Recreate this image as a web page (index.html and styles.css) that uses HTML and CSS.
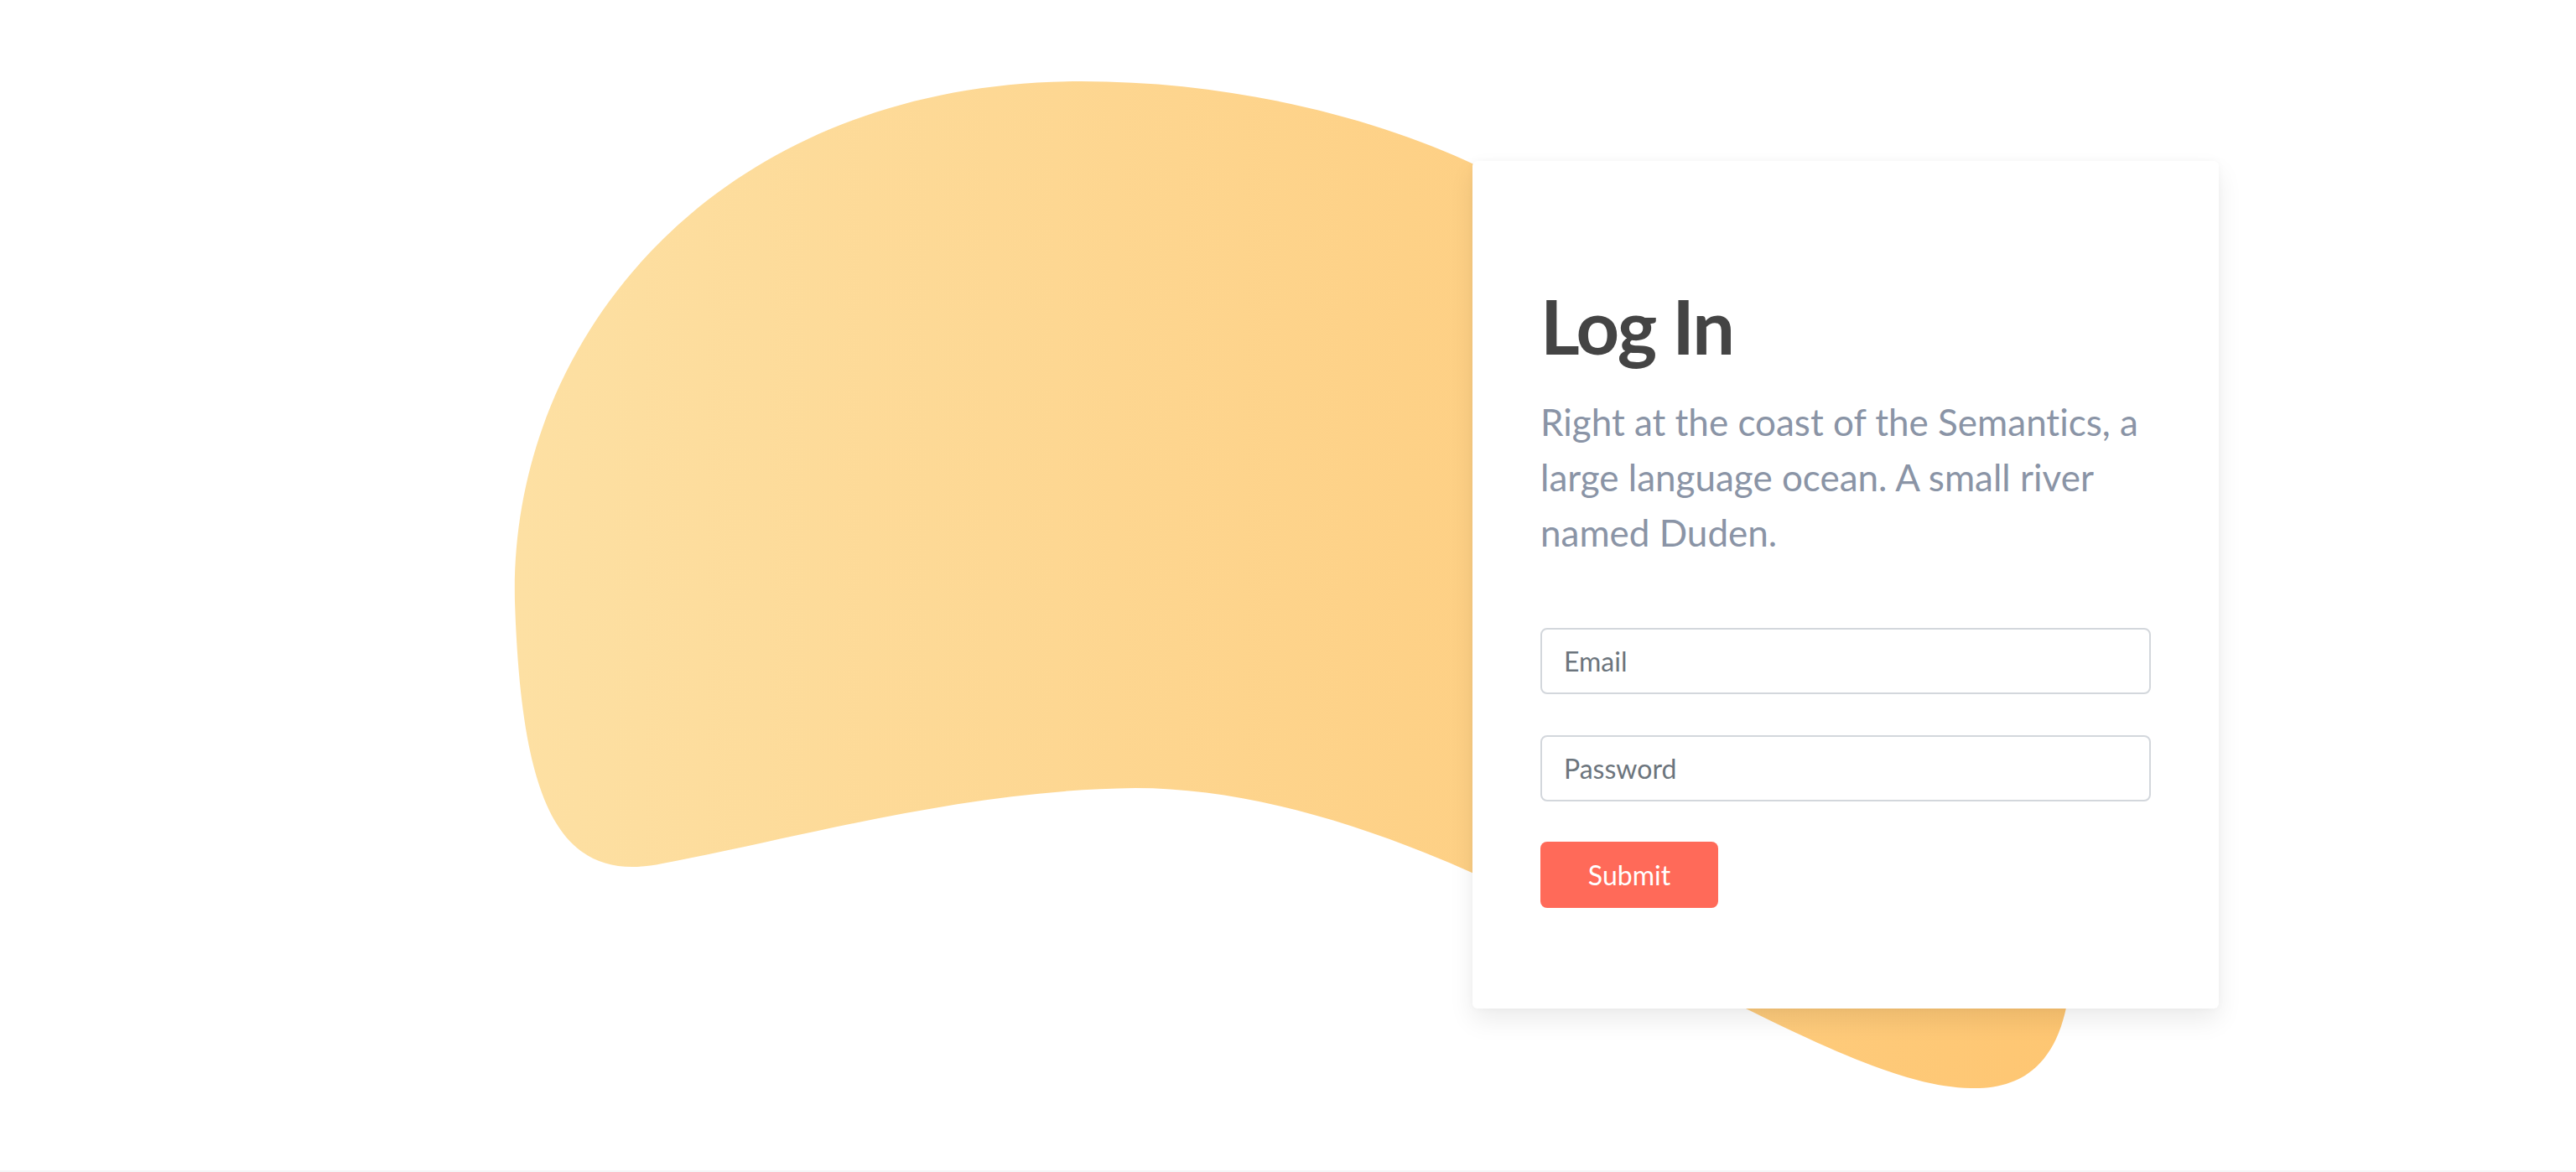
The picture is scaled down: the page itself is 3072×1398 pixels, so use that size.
FILE: index.html
```html
<!DOCTYPE html>
<html lang="en">
<head>
<meta charset="utf-8">
<title>Log In</title>
<link rel="stylesheet" href="styles.css">
</head>
<body>
<section class="hero">
  <svg class="blob" viewBox="0 0 3072 1396" preserveAspectRatio="none" aria-hidden="true">
    <defs>
      <linearGradient id="blobGrad" x1="614" y1="0" x2="2470" y2="0" gradientUnits="userSpaceOnUse">
        <stop offset="0" stop-color="#fde0a3"/>
        <stop offset="1" stop-color="#fec672"/>
      </linearGradient>
    </defs>
    <path fill="url(#blobGrad)" d="M1289 97 C1470 97 1640 140 1760 197 C2100 360 2480 700 2470 1150 C2466 1260 2420 1300 2350 1298 C2230 1296 2050 1180 1760 1043 C1620 980 1480 940 1354 940 C1150 942 950 1000 790 1030 C670 1055 622 965 614 718 C606 400 860 97 1289 97 Z"/>
  </svg>
  <div class="layout">
    <div class="card">
      <h1 class="title">Log In</h1>
      <p class="lead">Right at the coast of the Semantics, a large language ocean. A small river named Duden.</p>
      <form class="form">
        <input class="field" type="email" placeholder="Email">
        <input class="field" type="password" placeholder="Password">
        <button class="submit" type="button">Submit</button>
      </form>
    </div>
  </div>
</section>
</body>
</html>
```
FILE: styles.css
```css
* { box-sizing: border-box; }
html { background: #f4f5f7; }
body {
  margin: 0;
  font-family: "Lato", "Open Sans", "Liberation Sans", sans-serif;
  font-variant-ligatures: none;
}
.hero {
  position: relative;
  height: 1396px;
  background: #ffffff;
  overflow: hidden;
}
.blob {
  position: absolute;
  left: 0;
  top: 0;
  width: 3072px;
  height: 1396px;
}
.layout {
  position: relative;
  z-index: 1;
  display: flex;
  padding: 192px 0 0 1756px;
}
.card {
  width: 890px;
  background: #ffffff;
  border-radius: 6px;
  padding: 142px 81px 120px;
  box-shadow: 0 14px 30px rgba(0, 0, 0, 0.08), 0 0 10px rgba(0, 0, 0, 0.03);
}
.title {
  margin: 0;
  font-size: 90px;
  line-height: 1.2;
  font-weight: 700;
  letter-spacing: -2px;
  color: #444444;
}
.lead {
  margin: 28px 0 0;
  font-size: 44px;
  line-height: 66px;
  color: #8a94a6;
}
.form {
  margin-top: 81px;
  display: flex;
  flex-direction: column;
  align-items: flex-start;
}
.field {
  width: 728px;
  height: 79px;
  border: 2px solid #d3d7dc;
  border-radius: 8px;
  padding: 0 26px;
  font-family: inherit;
  font-size: 32px;
  color: #495057;
  background: #fff;
  margin: 0 0 49px;
  outline: none;
}
.field::placeholder { color: #6c757d; opacity: 1; }
.submit {
  margin-top: -1px;
  width: 212px;
  height: 79px;
  border: 0;
  border-radius: 8px;
  background: #ff6a59;
  color: #ffffff;
  font-family: inherit;
  font-size: 32px;
  cursor: pointer;
}
```
